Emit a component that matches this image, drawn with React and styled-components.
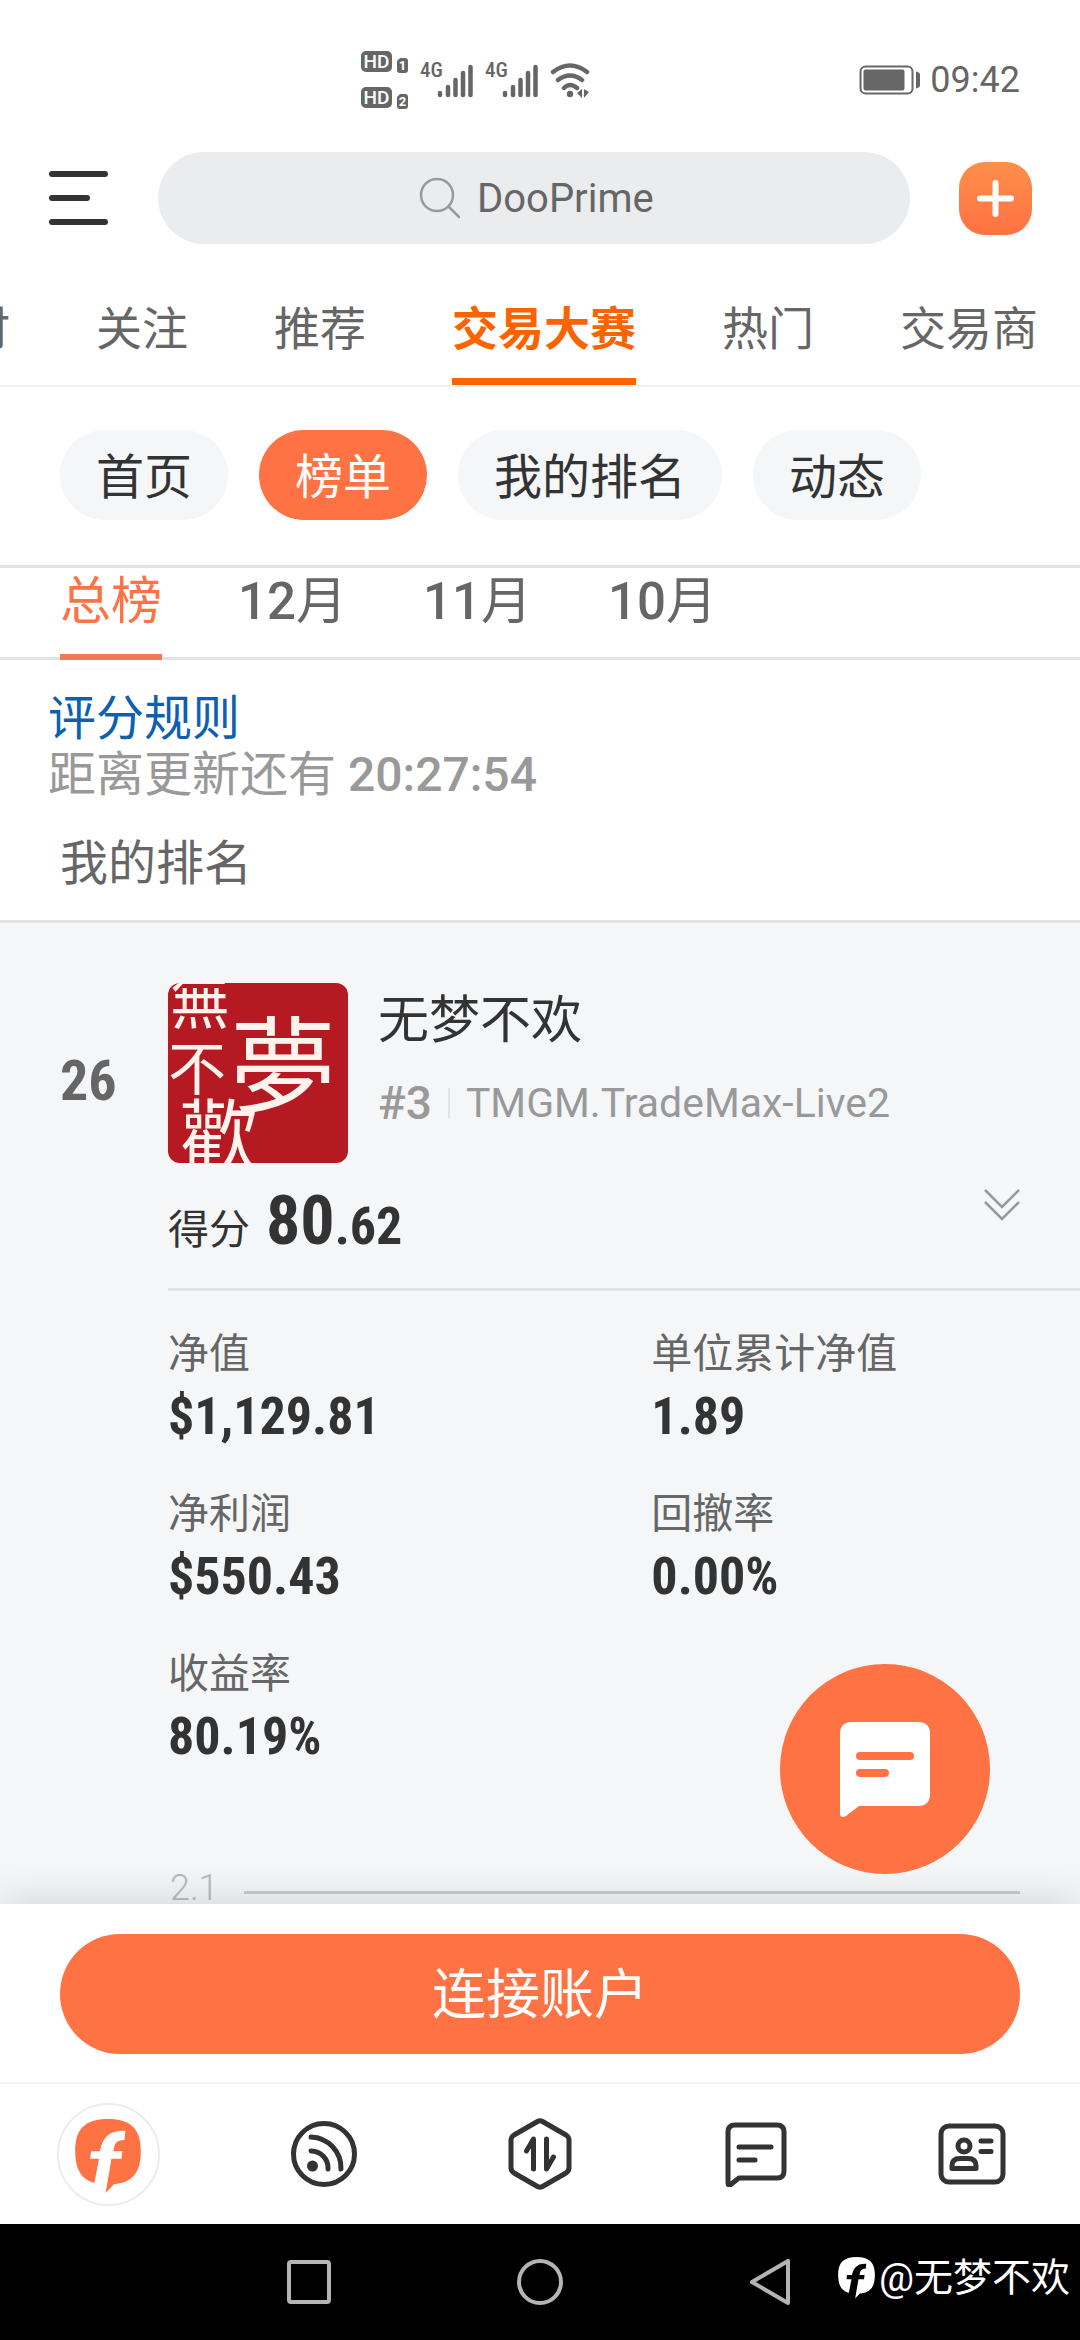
import React, { useState } from 'react';
import styled, { createGlobalStyle } from 'styled-components';

const ORANGE = '#ff7243';
const INK = '#333';
const GRAY = '#666';
const MUTED = '#999';
const RULE = '#e2e3e4';
const PANEL = '#f4f6f8';
const NUM = '"Roboto Condensed", Roboto, "Noto Sans CJK SC", sans-serif';

const GlobalStyle = createGlobalStyle`
  * { box-sizing: border-box; }
  body {
    margin: 0;
    background: #fff;
    color: ${INK};
    font-family: Roboto, "Noto Sans CJK SC", sans-serif;
  }
  button, input { font: inherit; color: inherit; border: 0; background: none; padding: 0; margin: 0; }
  a { text-decoration: none; color: inherit; }
  svg { display: block; flex: none; }
`;

const Screen = styled.div`
  display: flex;
  flex-direction: column;
  height: 100vh;
  overflow: hidden;
`;

/* status bar */
const StatusBar = styled.div`
  display: flex;
  align-items: center;
  justify-content: space-between;
  height: 132px;
  padding: 27px 60px 0 360px;
  color: ${GRAY};
  font-size: 36px;
`;
const StatusGroup = styled.div`
  display: flex;
  align-items: center;
  gap: ${p => p.$gap}px;
`;

/* header */
const Header = styled.header`
  display: flex;
  align-items: center;
  padding: 20px 48px;
`;
const IconButton = styled.button`
  display: flex;
  flex: none;
`;
const Search = styled.label`
  display: flex;
  flex: 1;
  align-items: center;
  justify-content: center;
  gap: 16px;
  height: 92px;
  margin: 0 49px;
  padding-left: 4px;
  border-radius: 46px;
  background: #ebecee;
`;
const SearchInput = styled.input`
  width: 176px;
  font-size: 40px;
  outline: 0;
  &::placeholder { color: ${GRAY}; opacity: 1; }
`;
const AddButton = styled(IconButton)`
  align-items: center;
  justify-content: center;
  width: 73px;
  height: 73px;
  border-radius: 26px;
  background: linear-gradient(#ff8f4b, ${ORANGE});
`;

/* channel tabs */
const Channels = styled.nav`
  display: flex;
  justify-content: flex-end;
  gap: 86px;
  padding-right: 42px;
  overflow: hidden;
  border-bottom: 2px solid #f1f1f2;
`;
const Channel = styled.a`
  flex: none;
  padding: 38px 0 22px;
  border-bottom: 7px solid ${p => (p.$active ? '#fa6400' : 'transparent')};
  color: ${p => (p.$active ? '#fa6400' : GRAY)};
  font-size: 46px;
  font-weight: ${p => (p.$active ? 700 : 400)};
  line-height: 54px;
`;

const Chips = styled.div`
  display: flex;
  gap: 31px;
  padding: 43px 60px 45px;
  border-bottom: 3px solid ${RULE};
`;
const Chip = styled.button`
  height: 90px;
  padding: 0 36px 4px;
  border-radius: 45px;
  background: ${p => (p.$active ? ORANGE : PANEL)};
  color: ${p => (p.$active ? '#fff' : INK)};
  font-size: 48px;
`;

const Months = styled.div`
  display: flex;
  gap: 76px;
  padding: 0 60px;
  border-bottom: 3px solid ${RULE};
`;
const Month = styled.button`
  margin-bottom: -3px;
  padding: 4px 0 22px;
  border-bottom: 6px solid ${p => (p.$active ? '#f07a52' : 'transparent')};
  color: ${p => (p.$active ? ORANGE : GRAY)};
  font-size: 51px;
  font-weight: 500;
  line-height: 60px;
  span { font-weight: 400; }
`;

const Notes = styled.section`
  display: flex;
  flex-direction: column;
  padding: 31px 48px 28px;
  border-bottom: 3px solid ${RULE};
  font-size: 48px;
  line-height: 56px;
`;
const RulesLink = styled.a`
  color: #0d60b0;
`;
const Countdown = styled.div`
  color: ${MUTED};
  time { font-weight: 500; }
`;
const SectionTitle = styled.h2`
  margin: 33px 12px 0;
  color: ${GRAY};
  font-size: 48px;
  font-weight: 400;
`;

/* leaderboard entry */
const Body = styled.main`
  position: relative;
  flex: 1;
  min-height: 0;
`;
const Scroller = styled.div`
  height: 100%;
  overflow: hidden;
  background: ${PANEL};
`;
const Entry = styled.article`
  display: grid;
  grid-template-columns: 108px 1fr;
  padding: 60px 0 0 60px;
`;
const Rank = styled.div`
  padding-top: 60px;
  height: 180px;
  color: ${GRAY};
  font-family: ${NUM};
  font-size: 56px;
  font-weight: 700;
  line-height: 76px;
`;
const Trader = styled.div`
  display: flex;
  gap: 30px;
`;
const Avatar = styled.svg`
  width: 180px;
  height: 180px;
  border-radius: 12px;
  background: #b51a22;
`;
const TraderInfo = styled.div`
  display: flex;
  flex-direction: column;
  gap: 14px;
`;
const Name = styled.h3`
  margin: 0;
  font-size: 51px;
  font-weight: 400;
  line-height: 76px;
`;
const Account = styled.div`
  display: flex;
  align-items: center;
  color: ${MUTED};
  font-size: 41px;
  line-height: 60px;
`;
const AccountNo = styled.span`
  font-size: 46px;
  font-weight: 500;
`;
const Divider = styled.span`
  width: 2px;
  height: 30px;
  margin: 0 16px;
  background: #e0e2e4;
`;
const Details = styled.div`
  grid-column: 2;
`;
const ScoreRow = styled.div`
  display: flex;
  align-items: flex-start;
  justify-content: space-between;
  padding: 18px 60px 27px 0;
  border-bottom: 3px solid ${RULE};
`;
const Score = styled.div`
  display: flex;
  align-items: baseline;
  height: 80px;
  font-size: 41px;
  line-height: 80px;
`;
const ScoreValue = styled.strong`
  margin-left: 16px;
  font-family: ${NUM};
  font-size: 68px;
  small { font-size: 52px; }
`;
const Stats = styled.dl`
  display: grid;
  grid-template-columns: 53fr 47fr;
  row-gap: 34px;
  margin: 0;
  padding: 34px 0 96px;
`;
const Label = styled.dt`
  color: ${GRAY};
  font-size: 41px;
  line-height: 58px;
`;
const Value = styled.dd`
  margin: 0;
  font-family: ${NUM};
  font-size: 52px;
  font-weight: 700;
  line-height: 68px;
`;
const Axis = styled.div`
  display: flex;
  align-items: center;
  gap: 25px;
  padding: 0 60px 0 2px;
  color: #b9bbbd;
  font-size: 36px;
  font-weight: 300;
  line-height: 42px;
`;
const GridLine = styled.hr`
  flex: 1;
  height: 3px;
  margin: 8px 0 0;
  border: 0;
  background: #c9cbcc;
`;
const ChatButton = styled.button`
  position: absolute;
  right: 90px;
  bottom: 30px;
  z-index: 2;
  display: flex;
  align-items: center;
  justify-content: center;
  width: 210px;
  height: 210px;
  border-radius: 50%;
  background: ${ORANGE};
`;

/* bottom bars */
const Connect = styled.div`
  z-index: 1;
  padding: 30px 60px 28px;
  background: #fff;
  box-shadow: 0 0 42px rgba(0, 0, 0, 0.16);
`;
const ConnectButton = styled.button`
  width: 100%;
  height: 120px;
  padding-bottom: 8px;
  border-radius: 60px;
  background: ${ORANGE};
  color: #fff;
  font-size: 54px;
`;
const TabBar = styled.nav`
  z-index: 1;
  display: flex;
  align-items: center;
  height: 142px;
  border-top: 2px solid #f1f1f2;
  background: #fff;
`;
const TabItem = styled.a`
  display: flex;
  flex: 1;
  justify-content: center;
`;
const HomeBadge = styled.span`
  display: flex;
  align-items: center;
  justify-content: center;
  width: 103px;
  height: 103px;
  padding-top: 4px;
  border: 2px solid #ededed;
  border-radius: 50%;
`;
const SystemBar = styled.footer`
  position: relative;
  display: flex;
  align-items: center;
  justify-content: center;
  gap: 186px;
  height: 116px;
  background: #000;
`;
const Watermark = styled.div`
  position: absolute;
  right: 10px;
  bottom: 34px;
  display: flex;
  align-items: center;
  gap: 4px;
  color: #fff;
  font-size: 39px;
  line-height: 56px;
`;

const HdIcon = () => (
  <svg width="48" height="58" viewBox="0 0 48 58" fill={GRAY} fontFamily="Roboto, sans-serif" fontWeight="700">
    {[0, 36].map((y, i) => (
      <g key={y}>
        <rect x="1" y={y} width="31" height="21" rx="5" />
        <text x="16.500" y={y + 17} fontSize="19" fill="#fff" textAnchor="middle" fontWeight="500">HD</text>
        <path d={`M37 ${y + 10}l3-3h5a3 3 0 0 1 3 3v9a3 3 0 0 1-3 3h-5a3 3 0 0 1-3-3z`} />
        <text x="42.500" y={y + 19} fontSize="13" fill="#fff" textAnchor="middle">{i + 1}</text>
      </g>
    ))}
  </svg>
);

const SignalIcon = () => (
  <svg width="53" height="58" viewBox="0 0 53 58">
    <text x="0" y="26" fontSize="21" fontWeight="500" fill={GRAY} fontFamily={NUM}>4G</text>
    <path d="M20 42v2M28 36v8M35.500 29v15M43 22v22M50.500 16v28" fill="none" stroke={GRAY} strokeWidth="4.500" strokeLinecap="round" />
  </svg>
);

const WifiIcon = () => (
  <svg width="42" height="58" viewBox="0 0 42 58" fill="none" stroke={GRAY} strokeWidth="4.500" strokeLinecap="round">
    <path d="M3 21q17-13 34 0M8 29q12-9 24 0M14 37q6-6 13 0" />
    <circle cx="20" cy="43" r="3.200" fill={GRAY} stroke="none" />
    <path d="M32 38v9l-5-5zM34 38v9l5-6z" fill={GRAY} stroke="none" />
  </svg>
);

const BatteryIcon = () => (
  <svg width="62" height="30" viewBox="0 0 62 30">
    <rect x="1.500" y="1.500" width="52" height="27" rx="5" fill="none" stroke={GRAY} strokeWidth="2" />
    <rect x="4.500" y="4.500" width="41" height="21" rx="2" fill={GRAY} />
    <path d="M57 6.500q4 1 4 3v11q0 2-4 3z" fill={GRAY} />
  </svg>
);

const BrandIcon = ({ size, bubble, mark }) => (
  <svg width={size} height={size * 1.13} viewBox="0 0 66 75">
    <path d="M33 0C56 0 66 10 66 32c0 23-9 32-27 33.500L30 75l1-9.500C9 65.500 0 55 0 32 0 10 10 0 33 0z" fill={bubble} />
    <path d="M50.500 12l-1 9c-7 0-9.500 3-10.500 8l-.7 3.500H47.500l-1 7.500H36.500L30.500 75 18 71l6-31h-9l1-7.500h9C27 20 34 11 50.500 12z" fill={mark} />
  </svg>
);

const line = { fill: 'none', stroke: INK, strokeWidth: 5, strokeLinecap: 'round', strokeLinejoin: 'round' };

const FeedIcon = () => (
  <svg width="68" height="68" viewBox="0 0 68 68" {...line}>
    <circle cx="34" cy="34" r="30.500" />
    <path d="M21 17a31 31 0 0 1 30 32M21 31a17 17 0 0 1 17 18" />
    <circle cx="22.500" cy="46" r="5.500" fill={INK} stroke="none" />
  </svg>
);
const TradeIcon = () => (
  <svg width="68" height="74" viewBox="0 0 68 74" {...line}>
    <path d="M31.500 4.500q2.500-1.500 5 0L60 18q3 2 3 5v28q0 3-3 5L36.500 69.500q-2.500 1.500-5 0L8 56q-3-2-3-5V23q0-3 3-5z" />
    <path d="M20.500 34l7-12v30M40.500 22v30l7-12" />
  </svg>
);
const MessageIcon = () => (
  <svg width="62" height="66" viewBox="0 0 62 66" {...line}>
    <path d="M10 4h42q7 0 7 7v39q0 7-7 7H14l-9 7q-2 0-2-2V11q0-7 7-7z" />
    <path d="M14 26h32M14 39h16" />
  </svg>
);
const ProfileIcon = () => (
  <svg width="68" height="62" viewBox="0 0 68 62" {...line}>
    <rect x="3" y="3" width="62" height="56" rx="8" />
    <circle cx="26" cy="23" r="6" />
    <path d="M14 45.500v-3q0-7 8-7h8q8 0 8 7v3zM43 18h10M43 28.500h10" />
  </svg>
);

const CHANNELS = ['实时', '关注', '推荐', '交易大赛', '热门', '交易商'];
const CHIPS = ['首页', '榜单', '我的排名', '动态'];
const MONTHS = ['12', '11', '10'];
const STATS = [
  ['净值', '$1,129.81'],
  ['单位累计净值', '1.89'],
  ['净利润', '$550.43'],
  ['回撤率', '0.00%'],
  ['收益率', '80.19%'],
];

export default function App() {
  const [chip, setChip] = useState('榜单');
  const [month, setMonth] = useState('all');
  return (
    <Screen>
      <GlobalStyle />
      <StatusBar>
        <StatusGroup $gap={12}>
          <HdIcon />
          <SignalIcon />
          <SignalIcon />
          <WifiIcon />
        </StatusGroup>
        <StatusGroup $gap={9}>
          <BatteryIcon />
          <span>09:42</span>
        </StatusGroup>
      </StatusBar>

      <Header>
        <IconButton aria-label="菜单">
          <svg width="61" height="56" viewBox="0 0 61 56" fill="none" stroke={INK} strokeWidth="6" strokeLinecap="round">
            <path d="M4 4h53M4 28h35M4 52h53" />
          </svg>
        </IconButton>
        <Search>
          <svg width="42" height="42" viewBox="0 0 42 42" fill="none" stroke={MUTED} strokeWidth="2.500" strokeLinecap="round">
            <circle cx="18" cy="18" r="16" />
            <path d="M30 30l10 10" />
          </svg>
          <SearchInput type="text" aria-label="搜索" placeholder="DooPrime" />
        </Search>
        <AddButton aria-label="发布">
          <svg width="37" height="37" viewBox="0 0 37 37" stroke="#fff" strokeWidth="6" strokeLinecap="round">
            <path d="M18.500 3v31M3 18.500h31" />
          </svg>
        </AddButton>
      </Header>

      <Channels>
        {CHANNELS.map(c => (
          <Channel key={c} href="#" $active={c === '交易大赛'}>{c}</Channel>
        ))}
      </Channels>

      <Chips>
        {CHIPS.map(c => (
          <Chip key={c} $active={c === chip} onClick={() => setChip(c)}>{c}</Chip>
        ))}
      </Chips>

      <Months>
        <Month $active={month === 'all'} onClick={() => setMonth('all')}><span>总榜</span></Month>
        {MONTHS.map(m => (
          <Month key={m} $active={month === m} onClick={() => setMonth(m)}>{m}<span>月</span></Month>
        ))}
      </Months>

      <Notes>
        <RulesLink href="#">评分规则</RulesLink>
        <Countdown>距离更新还有 <time>20:27:54</time></Countdown>
        <SectionTitle>我的排名</SectionTitle>
      </Notes>

      <Body>
        <Scroller>
          <Entry>
            <Rank>26</Rank>
            <Trader>
              <Avatar viewBox="0 0 180 180" fill="#fff3ee" fontFamily='"Noto Sans CJK TC", sans-serif' fontWeight="400">
                <text x="2" y="41" fontSize="60">無</text>
                <text x="62" y="122" fontSize="106">夢</text>
                <text x="0" y="107" fontSize="58">不</text>
                <text x="12" y="182" fontSize="78">歡</text>
              </Avatar>
              <TraderInfo>
                <Name>无梦不欢</Name>
                <Account>
                  <AccountNo>#3</AccountNo>
                  <Divider />
                  <span>TMGM.TradeMax-Live2</span>
                </Account>
              </TraderInfo>
            </Trader>
            <Details>
              <ScoreRow>
                <Score>
                  得分
                  <ScoreValue>80<small>.62</small></ScoreValue>
                </Score>
                <IconButton aria-label="展开">
                  <svg width="36" height="46" viewBox="0 0 36 46" fill="none" stroke={MUTED} strokeWidth="2.500">
                    <path d="M1 9l17 17L35 9M1 21l17 17 17-17" />
                  </svg>
                </IconButton>
              </ScoreRow>
              <Stats>
                {STATS.map(([label, value]) => (
                  <div key={label}>
                    <Label>{label}</Label>
                    <Value>{value}</Value>
                  </div>
                ))}
              </Stats>
              <Axis>
                <span>2.1</span>
                <GridLine />
              </Axis>
            </Details>
          </Entry>
        </Scroller>
        <ChatButton aria-label="评论">
          <svg width="92" height="98" viewBox="0 0 92 98">
            <path d="M13 2h66q12 0 12 12v60q0 12-12 12H20L7 96q-6 3-6-3V14Q1 2 13 2z" fill="#fff" />
            <path d="M21 36h50M21 53h25" stroke={ORANGE} strokeWidth="8" strokeLinecap="round" />
          </svg>
        </ChatButton>
      </Body>

      <Connect>
        <ConnectButton>连接账户</ConnectButton>
      </Connect>
      <TabBar>
        <TabItem href="#" aria-label="首页">
          <HomeBadge><BrandIcon size={66} bubble={ORANGE} mark="#fff" /></HomeBadge>
        </TabItem>
        <TabItem href="#" aria-label="订阅"><FeedIcon /></TabItem>
        <TabItem href="#" aria-label="交易"><TradeIcon /></TabItem>
        <TabItem href="#" aria-label="消息"><MessageIcon /></TabItem>
        <TabItem href="#" aria-label="我的"><ProfileIcon /></TabItem>
      </TabBar>

      <SystemBar>
        <IconButton aria-label="最近任务">
          <svg width="44" height="44" viewBox="0 0 44 44"><rect x="2" y="2" width="40" height="40" rx="2" fill="none" stroke="#b4b4b4" strokeWidth="4" /></svg>
        </IconButton>
        <IconButton aria-label="主屏幕">
          <svg width="46" height="46" viewBox="0 0 46 46"><circle cx="23" cy="23" r="21" fill="none" stroke="#b4b4b4" strokeWidth="4" /></svg>
        </IconButton>
        <IconButton aria-label="返回">
          <svg width="44" height="46" viewBox="0 0 44 46"><path d="M39 2v42L3 23z" fill="none" stroke="#b4b4b4" strokeWidth="4" strokeLinejoin="round" /></svg>
        </IconButton>
        <Watermark>
          <BrandIcon size={37} bubble="#fff" mark="#000" />
          <span>@无梦不欢</span>
        </Watermark>
      </SystemBar>
    </Screen>
  );
}
